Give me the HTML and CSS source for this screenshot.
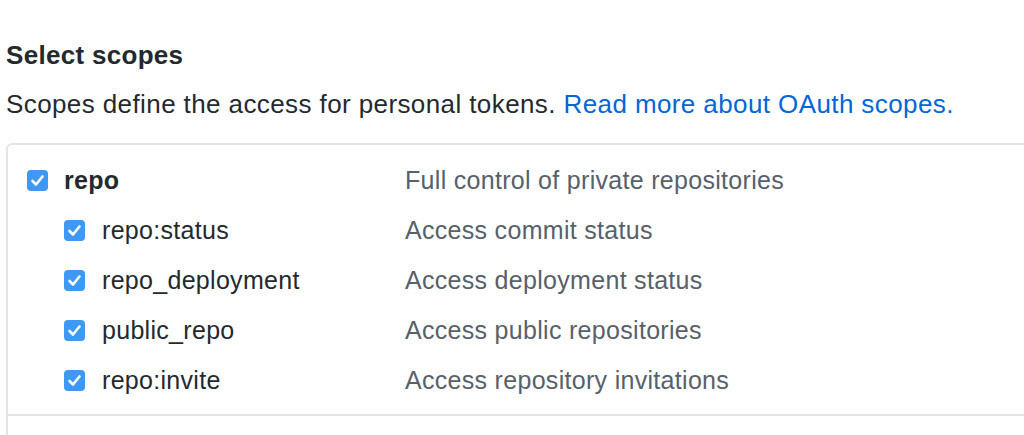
FILE: index.html
```html
<!DOCTYPE html>
<html>
<head lang="en">
    <meta charset="UTF-8">
    <title>Select scopes</title>
    <link rel="stylesheet" href="styles.css">
</head>
<body>
    <div class="page">
        <h2 class="title">Select scopes</h2>
        <p class="note">Scopes define the access for personal tokens. <a href="#">Read more about OAuth scopes.</a></p>
        <div class="scopes">
            <div class="group">
                <div class="row">
                    <label class="name parent">
                        <span class="check"><svg viewBox="0 0 21 21"><path d="M5.5 11 L9 14.5 L15.5 6.5"/></svg></span>
                        <b>repo</b>
                    </label>
                    <span class="desc">Full control of private repositories</span>
                </div>
                <div class="row">
                    <label class="name child">
                        <span class="check"><svg viewBox="0 0 21 21"><path d="M5.5 11 L9 14.5 L15.5 6.5"/></svg></span>
                        repo:status
                    </label>
                    <span class="desc">Access commit status</span>
                </div>
                <div class="row">
                    <label class="name child">
                        <span class="check"><svg viewBox="0 0 21 21"><path d="M5.5 11 L9 14.5 L15.5 6.5"/></svg></span>
                        repo_deployment
                    </label>
                    <span class="desc">Access deployment status</span>
                </div>
                <div class="row">
                    <label class="name child">
                        <span class="check"><svg viewBox="0 0 21 21"><path d="M5.5 11 L9 14.5 L15.5 6.5"/></svg></span>
                        public_repo
                    </label>
                    <span class="desc">Access public repositories</span>
                </div>
                <div class="row">
                    <label class="name child">
                        <span class="check"><svg viewBox="0 0 21 21"><path d="M5.5 11 L9 14.5 L15.5 6.5"/></svg></span>
                        repo:invite
                    </label>
                    <span class="desc">Access repository invitations</span>
                </div>
            </div>
            <div class="group"></div>
        </div>
    </div>
</body>
</html>
```

FILE: styles.css
```css
*{
    padding: 0;
    margin: 0;
    box-sizing: border-box;
}
html, body{
    overflow: hidden;
}
body{
    background: #fff;
    font-family: "Liberation Sans", Arial, sans-serif;
    color: #24292e;
}
a{
    text-decoration: none;
    color: #0366d6;
}
.page{
    width: 1100px;
    padding: 0 0 0 6px;
}
.title{
    font-size: 26px;
    font-weight: bold;
    letter-spacing: 0.3px;
    line-height: 32px;
    padding-top: 39px;
}
.note{
    font-size: 26px;
    letter-spacing: 0.4px;
    line-height: 30px;
    margin-top: 18px;
}
.scopes{
    margin-top: 24px;
    border: 2px solid #e1e4e8;
    border-radius: 6px;
}
.group{
    padding: 10px 0 9px 19px;
    border-bottom: 2px solid #e1e4e8;
}
.group:last-child{
    border-bottom: 0;
    height: 60px;
}
.row{
    display: flex;
    align-items: center;
    height: 50px;
    font-size: 25px;
    letter-spacing: 0.3px;
}
.name{
    width: 378px;
    display: flex;
    align-items: center;
    gap: 16px;
}
.name.child{
    padding-left: 37px;
    gap: 17px;
}
.check{
    width: 21px;
    height: 21px;
    border-radius: 4px;
    background: #3d99f5;
    display: block;
}
.check svg{
    width: 21px;
    height: 21px;
    display: block;
    fill: none;
    stroke: #fff;
    stroke-width: 2.6;
    stroke-linecap: round;
    stroke-linejoin: round;
}
.desc{
    color: #586069;
}
```
